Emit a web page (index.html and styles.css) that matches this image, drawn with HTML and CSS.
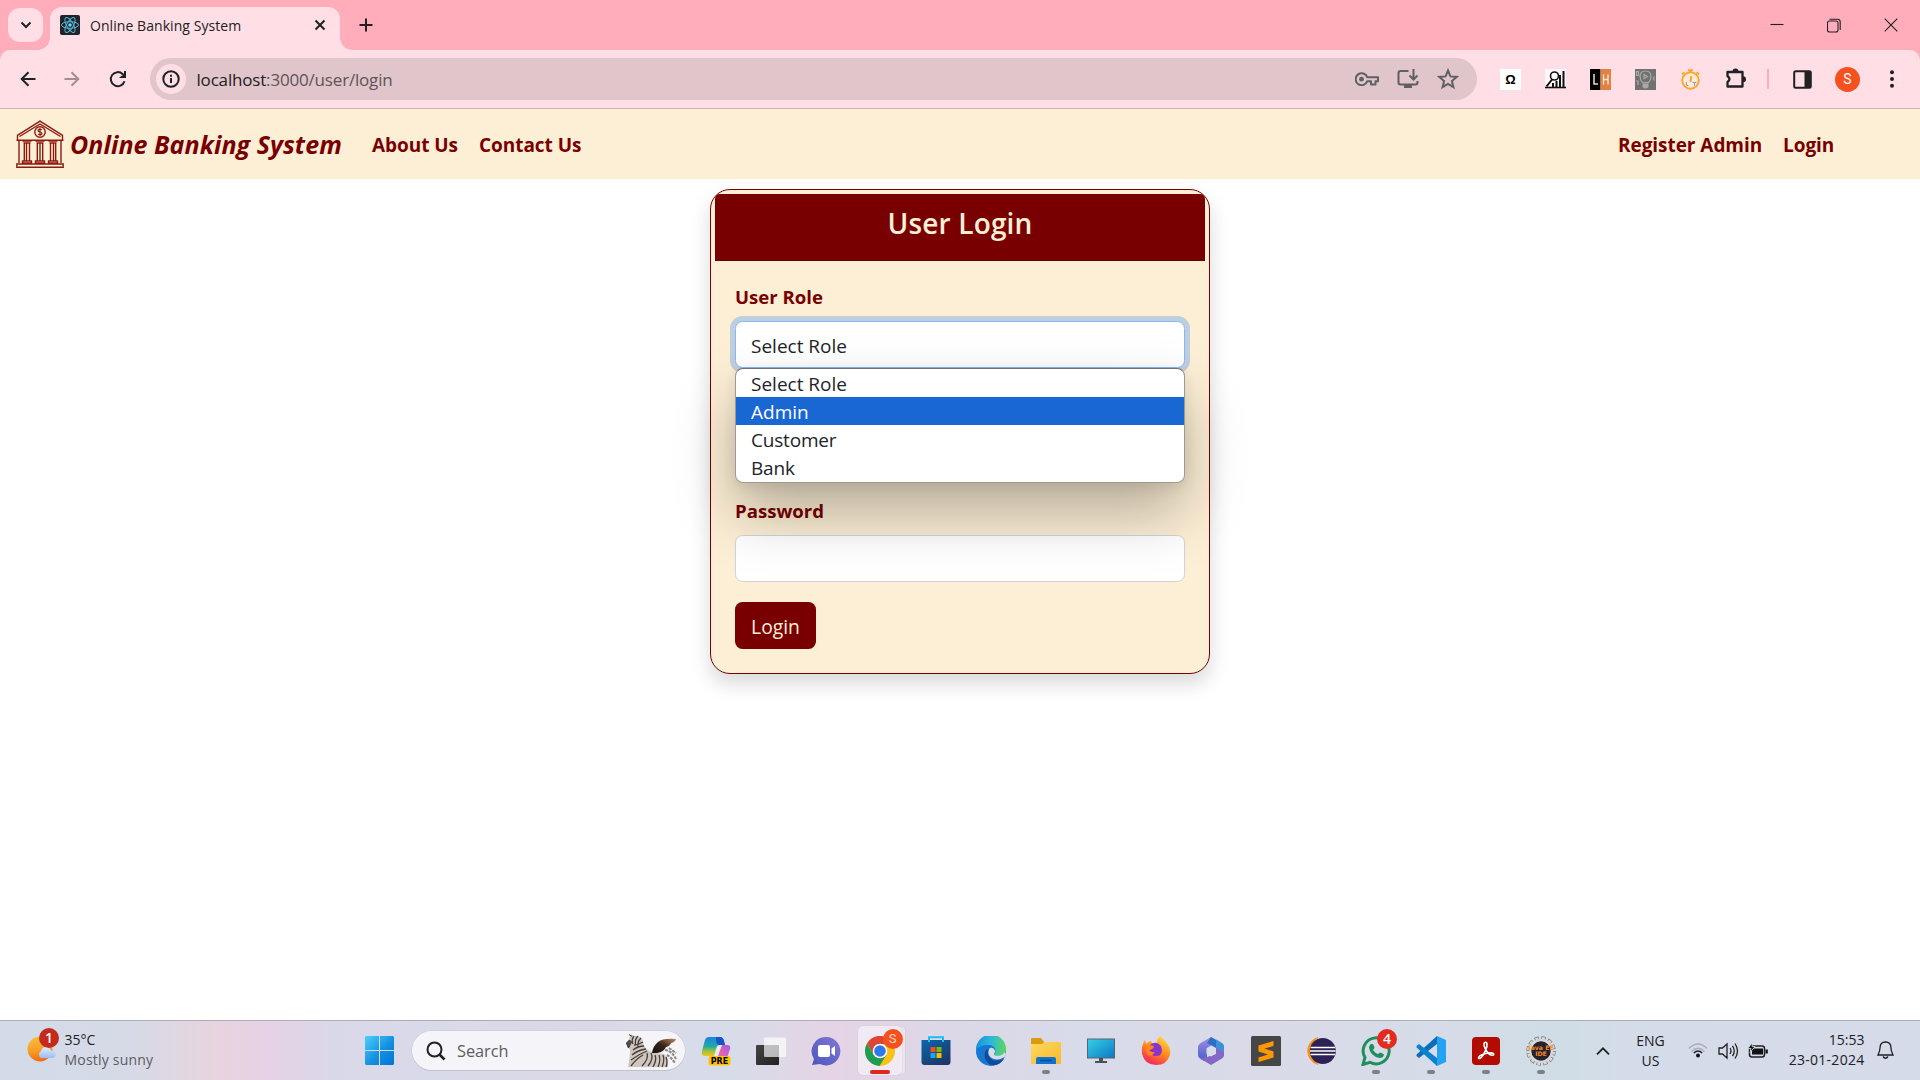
FILE: index.html
```html
<!DOCTYPE html>
<html lang="en">
<head>
<meta charset="utf-8">
<title>Online Banking System</title>
<link rel="stylesheet" href="styles.css">
</head>
<body>
<div class="tabstrip">
  <div class="tab-search"><svg width="12" height="8" viewBox="0 0 12 8"><path d="M1.5 1.5 6 6l4.500-4.500" class="ink w2"/></svg></div>
  <div class="tab">
    <svg class="favicon" width="20" height="20" viewBox="0 0 20 20"><rect width="20" height="20" rx="2" fill="#20232a"/><g fill="none" stroke="#53b9d4" stroke-width="1"><ellipse cx="10" cy="10" rx="8.500" ry="3.300"/><ellipse cx="10" cy="10" rx="8.500" ry="3.300" transform="rotate(60 10 10)"/><ellipse cx="10" cy="10" rx="8.500" ry="3.300" transform="rotate(120 10 10)"/></g><circle cx="10" cy="10" r="1.800" fill="#61dafb"/></svg>
    <span class="tab-title">Online Banking System</span>
    <svg class="tab-close" width="12" height="12" viewBox="0 0 12 12"><path d="M1.500 1.500l9 9M10.500 1.500l-9 9" class="ink w2"/></svg>
  </div>
  <svg class="new-tab" width="14" height="14" viewBox="0 0 14 14"><path d="M7 .5v13M.5 7h13" class="ink w2"/></svg>
  <div class="window-controls">
    <svg width="14" height="14" viewBox="0 0 14 14"><path d="M.5 6.500h13" class="ink w1"/></svg>
    <svg width="14" height="15" viewBox="0 0 14 15"><rect x=".5" y="3" width="10.500" height="11" rx="2" class="ink w1"/><path d="M2.500 1.200h8q2.700 0 2.700 2.700v8" class="ink w1"/></svg>
    <svg width="14" height="14" viewBox="0 0 14 14"><path d="M.7.7l12.600 12.600M13.300.7.7 13.300" class="ink w1"/></svg>
  </div>
</div>

<div class="toolbar-wrap"><div class="toolbar">
  <svg class="nav-icon" width="16" height="16" viewBox="0 0 16 16"><path d="M15.500 8H2M8.500 1.200 1.700 8l6.800 6.800" class="ink w2"/></svg>
  <svg class="nav-icon faded" width="16" height="16" viewBox="0 0 16 16"><path d="M.5 8H14M7.500 1.200 14.300 8l-6.800 6.800" class="ink w2"/></svg>
  <svg class="nav-icon reload" width="18" height="18" viewBox="0 0 18 18"><path d="M15.500 11.200A7 7 0 1 1 13.800 4.200L16 6.500" class="ink w2"/><path d="M17 1v7h-7l2.500-2.300L15 5.500V1z" fill="#202124"/></svg>
  <div class="omnibox">
    <span class="site-info"><svg width="18" height="18" viewBox="0 0 18 18"><circle cx="9" cy="9" r="7.700" class="ink w2"/><path d="M9 8v5M9 4.800v2" class="ink w2"/></svg></span>
    <span class="url"><span class="host">localhost</span>:3000/user/login</span>
    <svg width="24" height="14" viewBox="0 0 24 14"><path d="M12.300 5.200A6 6 0 1 0 12.300 9.200H16v3.300h4.500V9.200H23v-4z" fill="none" stroke="#5f6063" stroke-width="2" stroke-linejoin="round"/><circle cx="6.500" cy="7.200" r="2.400" fill="#5f6063"/></svg>
    <svg width="22" height="21" viewBox="0 0 22 21"><path d="M11.500 2H3.500Q1.500 2 1.500 4v9.500q0 2 2 2h15q2 0 2-2V12M16.500 0v9.500M12.500 6.500l4 4 4-4" fill="none" stroke="#5f6063" stroke-width="2"/><path d="M7 16h8v3H7z" fill="#5f6063"/></svg>
    <svg width="22" height="22" viewBox="0 0 22 22"><path d="M11 2.500l2.400 5.900 6.300.5-4.800 4.100 1.500 6.200L11 15.900l-5.400 3.300 1.500-6.200L2.300 8.900l6.300-.5z" fill="none" stroke="#5f6063" stroke-width="2"/></svg>
  </div>
  <div class="extensions">
    <svg width="21" height="21" viewBox="0 0 21 21"><rect width="21" height="21" fill="#fff"/><text x="10.500" y="15" text-anchor="middle" class="omega">Ω</text></svg>
    <svg width="21" height="21" viewBox="0 0 21 21"><rect width="21" height="19" fill="#fff" opacity=".75"/><path d="M0 18.500h21" stroke="#111" stroke-width="1.600"/><circle cx="9.500" cy="7" r="4" fill="#fff" stroke="#111" stroke-width="1.600"/><path d="M7 10.500 1.500 17.500M8 18v-4M11.500 18v-6M15 18V6M18.500 18V2" stroke="#111" stroke-width="2"/></svg>
    <svg width="21" height="21" viewBox="0 0 21 21"><rect width="10.500" height="21" fill="#000"/><rect x="10.500" width="10.500" height="21" fill="#e08244"/><path d="M4 5v10h4" fill="none" stroke="#ddd" stroke-width="1.500"/><path d="M13.500 5.500v10M18 5.500v10M13.500 10.500H18" fill="none" stroke="#fff" stroke-opacity=".8" stroke-width="1.300"/></svg>
    <svg width="21" height="21" viewBox="0 0 21 21"><rect width="21" height="21" fill="#717171"/><g fill="none" stroke="#aaa" stroke-width="1.200"><path d="M7.500 13.500Q5 11 5 7.500 5 2 10.500 2T16 7.500q0 3.500-2.500 6z"/><path d="M9 5.500v4l3.500-2z"/><path d="M1.500 2.500h2v4h-2zM1 12h2v4M19.500 7.500q-2 2.500 0 4"/></g><path d="M7.500 14.500h6V18q-3 3-6 0z" fill="#aaa"/></svg>
    <svg width="21" height="21" viewBox="0 0 21 21"><circle cx="10.500" cy="11.500" r="8.200" fill="#ffe9df" stroke="#fba72b" stroke-width="1.900"/><path d="M8 1.200h5M10.500 1v3M2 5.500l2.500-2.200M19 5.500l-2.500-2.200M10.500 13l.7-6" stroke="#fba72b" stroke-width="2"/><path d="M6.500 13v3.500h2M12.500 13.500h4M14.500 13.500V17" fill="none" stroke="#999" stroke-width="1"/></svg>
    <svg width="22" height="22" viewBox="0 0 22 22"><path d="M3 4h14.500v14.500H2.500V14q4-2.800 0-6V4z" fill="none" stroke="#202124" stroke-width="2.300" stroke-linejoin="round"/><path d="M7.500 3.500a3 3 0 0 1 6 0zM18 8.200a3 3 0 0 1 0 6z" fill="#202124"/></svg>
  </div>
  <span class="divider"></span>
  <svg class="side-panel" width="19" height="19" viewBox="0 0 19 19"><rect x="1.200" y="1.200" width="16.600" height="16.600" rx="1.500" class="ink w2"/><path d="M11.500 1H18v17h-6.500z" fill="#202124"/></svg>
  <span class="avatar">S</span>
  <svg class="menu-dots" width="4" height="18" viewBox="0 0 4 18"><g fill="#202124"><circle cx="2" cy="2.200" r="2"/><circle cx="2" cy="9" r="2"/><circle cx="2" cy="15.800" r="2"/></g></svg>
</div></div>

<main class="page">
  <nav class="navbar">
    <svg class="logo" width="48" height="48" viewBox="0 0 48 48" fill="none" stroke="#8c1c13" stroke-width="1.400"><path d="M1.500 15.500v4M46.500 15.500v4M1 15.700 24 1.200l23 14.500M3.500 16.500 24 4l20.500 12.500M.5 20.300h47"/><circle cx="24" cy="12" r="5.200"/><path d="M26 9.700q-3.800-1.200-4 .8 0 1.200 2 1.500t2 1.500q-.2 2-4 .8M24 8v8" stroke-width="1.200"/><path d="M6.500 21h9M19.500 21h9M32.500 21h9M7.500 23h7M20.500 23h7M33.500 23h7M8.300 23.500V41M10.500 23.500V41M13.500 23.500V41M21.300 23.500V41M24 23.500V41M26.700 23.500V41M34.500 23.500V41M37.500 23.500V41M39.700 23.500V41M3 20.500V43M45 20.500V43M6.500 41h9v2h-9zM19.500 41h9v2h-9zM32.500 41h9v2h-9zM.8 44h46.400v3.300H.8z"/></svg>
    <a class="brand">Online Banking System</a>
    <a class="nav-link about">About Us</a>
    <a class="nav-link contact">Contact Us</a>
    <a class="nav-link register">Register Admin</a>
    <a class="nav-link signin">Login</a>
  </nav>

  <section class="card">
    <h5 class="card-header">User Login</h5>
    <form class="card-body">
      <label class="label">User Role</label>
      <div class="select-wrap">
        <div class="control focused">Select Role</div>
        <ul class="options">
          <li>Select Role</li>
          <li class="active">Admin</li>
          <li class="tight">Customer</li>
          <li class="tight">Bank</li>
        </ul>
      </div>
      <label class="label password">Password</label>
      <div class="control"></div>
      <button class="submit" type="button">Login</button>
    </form>
  </section>
</main>

<footer class="taskbar">
  <div class="weather">
    <div class="weather-icon"><svg width="30" height="28" viewBox="0 0 30 28"><defs><linearGradient id="sun" x1=".2" y1="0" x2=".4" y2="1"><stop offset="0" stop-color="#f6c03b"/><stop offset=".6" stop-color="#f79a28"/><stop offset="1" stop-color="#f26a12"/></linearGradient><linearGradient id="cloud" x1="0" y1="0" x2="0" y2="1"><stop offset="0" stop-color="#dcecff"/><stop offset="1" stop-color="#9dbdf0"/></linearGradient></defs><circle cx="13" cy="14" r="12.500" fill="url(#sun)"/><path d="M14 23a4 4 0 0 1 0-7q1-4 5-4 4 0 5 3.500 4.500.5 4.500 4T25 23z" fill="url(#cloud)"/></svg><span class="badge dark">1</span></div>
    <div class="weather-text"><span class="temp">35°C</span><span class="cond">Mostly sunny</span></div>
  </div>
  <div class="app start"><svg width="29" height="29" viewBox="0 0 29 29"><defs><linearGradient id="win" x1="0" y1="0" x2="1" y2="1"><stop offset="0" stop-color="#4cd0fb"/><stop offset=".55" stop-color="#1390e0"/><stop offset="1" stop-color="#0474d3"/></linearGradient></defs><path d="M1 0h13v14H0V1zM15 0h13l1 1v13H15zM0 15h14v14H1l-1-1zM15 15h14v13l-1 1H15z" fill="url(#win)"/></svg></div>
  <div class="search">
    <svg width="20" height="20" viewBox="0 0 20 20"><circle cx="8.500" cy="8.500" r="7" class="ink w2"/><path d="M13.500 13.500l5 5" class="ink w25"/></svg>
    <span class="search-text">Search</span>
    <svg class="zebra" width="54" height="35" viewBox="0 0 54 35"><defs><linearGradient id="wing" x1="0" y1="1" x2="1" y2="0"><stop offset="0" stop-color="#151210"/><stop offset=".5" stop-color="#3a2519"/><stop offset="1" stop-color="#c08a62"/></linearGradient></defs><path d="M3 34q2-8 2-17l-3-4q-2-3 1-5L6 1l3 2q8-1 9 6 1 6 6 9 8 3 15 3 5 3 4 13z" fill="#cfc6bd"/><path d="M27 20q1-7 6-11 5-4 18-3-1 3-5 4-1 3-5 4-2 5-9 6z" fill="url(#wing)"/><path d="M9 3q-3 4-1 8M13 3q-4 4-2 9M16 5q-4 4-3 9M18 9q-5 3-9 3M19 13q-6 0-11 4M21 16q-8 1-14 6M22 18q-8 3-16 9M18 22q-7 4-12 11M22 20q2 6-5 13M26 20q3 6-3 13M30 22q2 5-2 12M34 22q2 5-1 12M38 22q2 5-1 12M41 24q2 5 0 10" fill="none" stroke="#463f3c" stroke-width="1.300"/><path d="M1.500 10l3-3 2 2-3 6zM4 1.500l3 2" fill="#55504e" stroke="#333"/><path d="M40 17q7 1 11 9M42 22q4 2 8 8M44 15l7 5" fill="none" stroke="#8d867f" stroke-width="2" stroke-dasharray="3 1"/></svg>
  </div>
  <div class="app"><svg width="30" height="30" viewBox="0 0 30 30"><defs><linearGradient id="cpa" x1="0" y1="0" x2="0" y2="1"><stop offset="0" stop-color="#1685e8"/><stop offset=".5" stop-color="#25a9a0"/><stop offset=".75" stop-color="#9bc53a"/><stop offset="1" stop-color="#f5c21c"/></linearGradient><linearGradient id="cpb" x1="1" y1="0" x2="0" y2="1"><stop offset="0" stop-color="#a855f0"/><stop offset="1" stop-color="#ff6f86"/></linearGradient></defs><path d="M8 1h11q3 0 4 4l1 4h-6q-2 0-3 4l-2 7H4Q0 20 1 15L4 4q1-3 4-3z" fill="url(#cpa)"/><path d="M15 1h4q3 0 4 4l1 4h-6q-2 0-3-5z" fill="#1655c5"/><path d="M19 9h7q4 0 3 4l-2 6q-1 3-4 3h-8z" fill="url(#cpb)"/><path d="M18.500 9h2.500l-4 11h-3.500l2-7q1-3.500 3-4z" fill="#eee8f2"/><rect x="7.500" y="20" width="22" height="9.500" rx="2.500" fill="#ffc400"/><text x="18.500" y="28" text-anchor="middle" class="pre">PRE</text></svg></div>
  <div class="app"><svg width="30" height="30" viewBox="0 0 30 30"><defs><linearGradient id="tv" x1="0" y1="0" x2="1" y2="1"><stop offset="0" stop-color="#444"/><stop offset="1" stop-color="#222"/></linearGradient></defs><rect y="9" width="23" height="20" rx="1" fill="url(#tv)"/><rect x="8" y="1.500" width="22" height="19.500" rx="1" fill="#fff" opacity=".68"/></svg></div>
  <div class="app"><svg width="30" height="30" viewBox="0 0 30 30"><defs><linearGradient id="chat" x1="1" y1="0" x2="0" y2="1"><stop offset="0" stop-color="#8377d6"/><stop offset="1" stop-color="#4c56bd"/></linearGradient></defs><path d="M15 1a14.200 14.200 0 1 1-6 27l-8 1 2-6A14.200 14.200 0 0 1 15 1z" fill="url(#chat)"/><rect x="7" y="9" width="12" height="12" rx="2" fill="#fff"/><path d="M20.500 12.500l3.500-2.500v10l-3.500-2.500z" fill="#fff"/></svg></div>
  <div class="app"><div class="tile"><svg width="30" height="30" viewBox="0 0 30 30"><circle cx="15" cy="15" r="15" fill="#fbc116"/><path d="M15 8H28.300A15 15 0 0 0 2 7.500l6.500 11z" fill="#db4437"/><path d="M2 7.500A15 15 0 0 0 14.500 30L21.500 18.700 15 22 8.500 18.700z" fill="#1e9e55"/><circle cx="15" cy="15" r="7.300" fill="#fff"/><circle cx="15" cy="15" r="5.800" fill="#2e78ea"/></svg><span class="badge profile">S</span></div><span class="run-mark current"></span></div>
  <div class="app"><svg width="30" height="30" viewBox="0 0 30 30"><defs><linearGradient id="store" x1="0" y1="0" x2=".7" y2="1"><stop offset="0" stop-color="#0c66b0"/><stop offset="1" stop-color="#1c3866"/></linearGradient></defs><path d="M8 6V1.200h14V6" fill="none" stroke="#1cbdf2" stroke-width="2"/><path d="M.5 4h29v22q0 3-3 3h-23q-3 0-3-3z" fill="url(#store)"/><path d="M8 4v2M22 4v2" stroke="#1cbdf2" stroke-width="2"/><path d="M9.500 11h5v5h-5z" fill="#f25022"/><path d="M15.500 11h5v5h-5z" fill="#7fba00"/><path d="M9.500 17h5v5h-5z" fill="#1aa7f0"/><path d="M15.500 17h5v5h-5z" fill="#ffb900"/></svg></div>
  <div class="app"><svg width="30" height="30" viewBox="0 0 30 30"><defs><linearGradient id="ed1" x1="0" y1=".3" x2="1" y2=".4"><stop offset="0" stop-color="#1d8de0"/><stop offset=".5" stop-color="#2bb9dc"/><stop offset="1" stop-color="#5ed65c"/></linearGradient></defs><circle cx="15" cy="15" r="15" fill="#1477d4"/><path d="M0 14A15 15 0 0 1 30 13q0 7-7.500 7-4.500 0-4.500-2 1.500-1 1.500-3.500Q19 9 12 9 4 9 0 14z" fill="url(#ed1)"/><path d="M10 14q-4 8 3 14 8 4 15-5-8 3-13 0-5-4-2-10z" fill="#0f4b96"/><path d="M12.500 15q-1 5 4 7.500 6 2.500 11-1 1.500-1 .5 1L30 18l-1-2q-3 4-7 3.800-4.500 0-4-2 1.500-1 1-3.500-1.500-3-4-2.500t-2.500 3.200z" fill="#d9dbe9"/></svg></div>
  <div class="app"><svg width="30" height="30" viewBox="0 0 30 30"><defs><linearGradient id="fold" x1="0" y1="0" x2="1" y2="1"><stop offset="0" stop-color="#ffd95e"/><stop offset="1" stop-color="#f7b92e"/></linearGradient></defs><path d="M0 3q0-1 1-1h9l3 4v6H0z" fill="#dd9a0c"/><path d="M0 8h11l2-2h16q1 0 1 1v20q0 1-1 1H1q-1 0-1-1z" fill="url(#fold)"/><path d="M5 28v-5q0-2 2-2h16q2 0 2 2v5z" fill="#1273cd"/><path d="M9 24.500h12" stroke="#0b4a94" stroke-width="1.500"/></svg><span class="run-mark"></span></div>
  <div class="app"><svg width="28" height="26" viewBox="0 0 28 26"><defs><linearGradient id="mon" x1="0" y1="0" x2="1" y2="1"><stop offset="0" stop-color="#34d2e4"/><stop offset="1" stop-color="#0c77c8"/></linearGradient></defs><rect x=".5" y="1" width="27" height="19" fill="url(#mon)" stroke="#5b646c"/><path d="M12 20h4v3h4v2H8v-2h4z" fill="#4c5157"/></svg></div>
  <div class="app"><svg width="30" height="30" viewBox="0 0 30 30"><defs><linearGradient id="ff" x1=".8" y1="0" x2=".3" y2="1"><stop offset="0" stop-color="#ffe13f"/><stop offset=".5" stop-color="#ff8a1e"/><stop offset="1" stop-color="#f5205f"/></linearGradient></defs><path d="M19 0q6 5 8 9 3 5 2 10Q26 29 15 29T1 18Q0 10 4 4l1 4q3-3 5-3l1 2q3 1 5 1-1-5 3-8z" fill="url(#ff)"/><path d="M9 9q6-5 11 1 3 10-5 10-6 0-7-6z" fill="#8a34c9"/><path d="M4 12q2-4 9-2-1 4-5 4 3 3 6 2-3 5-7 3z" fill="#ff851c"/></svg></div>
  <div class="app"><svg width="26" height="28" viewBox="0 0 26 28"><defs><linearGradient id="m1" x1="0" y1="0" x2="0" y2="1"><stop offset="0" stop-color="#a78ae0"/><stop offset="1" stop-color="#4560cf"/></linearGradient></defs><path d="M13 0 2 6.500Q0 8 0 10v8q0 2 2 3.500l4 2.500 3-4V12l7-5z" fill="url(#m1)"/><path d="M13 0q1 0 11 6.500 2 1.500 2 3.500v9l-8-4v-4L9 6z" fill="#2a70c8"/><path d="M26 12v6q0 2-2 3.500L13 28 2 21.500l7-1.500 9-3V9z" fill="#8467c6"/><path d="M18 11l8 4V9q0-1.500-2-3l-6-3.500z" fill="#3f8fdb"/><path d="M13 8.500l4.500 2.700v5.600L13 19.500l-4.500-2.700v-5.600z" fill="#d9dbe9"/></svg></div>
  <div class="app"><svg width="30" height="30" viewBox="0 0 30 30"><rect width="30" height="30" rx="1.500" fill="#464646"/><path d="M22.500 5 7.500 9.500v6l9.500 3-9.500 3V26l15-4.500v-6l-9-3 9-2.500z" fill="#ff9800"/></svg></div>
  <div class="app"><svg width="30" height="30" viewBox="0 0 30 30"><path d="M12 1.500A14 14 0 0 0 12 28.500 17 17 0 0 1 12 1.500z" fill="#f7941e" stroke="#f7941e"/><circle cx="16.800" cy="15" r="13" fill="#2c2255"/><path d="M4.500 11.500h24.500M4 15h25.500M4.500 18.500h24.500" stroke="#fff" stroke-width="1.700"/></svg></div>
  <div class="app"><svg width="30" height="30" viewBox="0 0 30 30"><path d="M2 28.500l2-7A13 13 0 1 1 9 26.300z" fill="none" stroke="#1f8f5b" stroke-width="3"/><path d="M10 8q2-1 3 2l.5 2-1.500 2q2 3 5 4l2-1.500q2 .5 4 2-.5 3.500-4.500 3.500Q9 20 8 11.500 8 9 10 8z" fill="#1f8f5b"/></svg><span class="badge count">4</span><span class="run-mark"></span></div>
  <div class="app"><svg width="30" height="30" viewBox="0 0 30 30"><path d="M21 0v8L3 22l-2.500-2v-1.500z" fill="#0a6fb8"/><path d="M21 30v-8L3 8 .5 10v1.500z" fill="#0c82cf"/><path d="M21 0 30 4v22l-9 4z" fill="#24a3f2"/></svg><span class="run-mark"></span></div>
  <div class="app"><svg width="28" height="28" viewBox="0 0 28 28"><rect width="28" height="28" rx="4" fill="#b30b00"/><path d="M13 5.500c2.500-1 2.500 3 1 6.500-1.500 4-4.500 9-6.500 9.500-2 0-1-2.500 3-4 4-1.600 9.500-2.200 11-.8 1 1.800-1.800 2.300-4.300.4C14 14.500 11.500 8.500 12 6.500z" fill="none" stroke="#fff" stroke-width="1.600"/></svg><span class="run-mark"></span></div>
  <div class="app"><svg width="30" height="30" viewBox="0 0 30 30"><circle cx="15" cy="15" r="12.700" fill="none" stroke="#6f6f6f" stroke-width="4" stroke-dasharray="4.200 2.450"/><circle cx="15" cy="15" r="12.400" fill="none" stroke="#d8d8d8" stroke-width="3.400" stroke-dasharray="3 3.490" stroke-dashoffset="-.6"/><circle cx="15" cy="15" r="10.800" fill="#26222e" stroke="#d8d8d8" stroke-width="2.200"/><text x="15" y="13.500" text-anchor="middle" class="jee">Java EE</text><text x="15" y="20" text-anchor="middle" class="jee">IDE</text></svg><span class="run-mark"></span></div>
  <div class="tray">
    <svg class="chevron" width="14" height="8" viewBox="0 0 14 8"><path d="M1 7.300l6-6 6 6" class="ink w18"/></svg>
    <div class="lang"><span>ENG</span><span>US</span></div>
    <svg class="wifi" width="20" height="15" viewBox="0 0 20 15" fill="none"><path d="M.8 5.500q9.200-9 18.400 0M3.500 8.500q6.500-6.500 13 0" stroke="#a9adb8" stroke-width="1.300"/><path d="M5.800 10q4.200-4 8.400 0" stroke="#222" stroke-width="1.500"/><circle cx="10" cy="12.500" r="2" fill="#111"/></svg>
    <svg class="volume" width="21" height="18" viewBox="0 0 21 18"><path d="M1 6h3.500L9 2v14l-4.500-4H1zM12 6q2 3 0 6M14.500 3.800q3.500 5.200 0 10.400M17 1.500q5 7.500 0 15" class="ink w13"/></svg>
    <svg class="battery" width="20" height="16" viewBox="0 0 20 16"><rect x="1.500" y="3" width="15" height="11" rx="2.500" class="ink w15"/><path d="M4 5.500h11v6H4z" fill="#111"/><path d="M17.500 6.500h2.300v4h-2.300z" fill="#111"/><path d="M4 0 0 5.500h3L2 9.500l5-6H4.200z" fill="#111" stroke="#d6dbe8" stroke-width=".8"/></svg>
    <div class="clock"><span>15:53</span><span class="date">23-01-2024</span></div>
    <svg class="bell" width="17" height="19" viewBox="0 0 17 19"><path d="M8.500 1q5.500 0 5.500 6 0 3 2 7H1q2-4 2-7 0-6 5.500-6z" class="ink w13"/><path d="M6 15.500q2.500 3.500 5 0" class="ink w13"/></svg>
  </div>
</footer>
</body>
</html>
```
FILE: styles.css
```css
* { box-sizing: border-box; }
body {
  margin: 0;
  width: 1920px;
  height: 1080px;
  overflow: hidden;
  display: flex;
  flex-direction: column;
  background: #fff;
  font-family: "Open Sans", "Noto Sans", sans-serif;
  color: #202124;
}
svg { display: block; flex: none; }
.ink { fill: none; stroke: #202124; }
.w1 { stroke-width: 1.100; }
.w13 { stroke-width: 1.300; }
.w15 { stroke-width: 1.500; }
.w18 { stroke-width: 1.800; }
.w2 { stroke-width: 2; }
.w25 { stroke-width: 2.500; }

/* Browser tab strip */
.tabstrip {
  height: 50px;
  flex: none;
  display: flex;
  align-items: center;
  padding-left: 8px;
  background: #ffadbb;
}
.tab-search {
  width: 35px;
  height: 34px;
  border-radius: 12px;
  background: #ffdfe5;
  display: flex;
  align-items: center;
  justify-content: center;
}
.tab {
  position: relative;
  align-self: flex-end;
  width: 290px;
  height: 43px;
  margin-left: 7px;
  padding: 0 14px 7px 10px;
  border-radius: 12px 12px 0 0;
  background: #ffdfe5;
  display: flex;
  align-items: center;
}
.tab::before, .tab::after {
  content: "";
  position: absolute;
  bottom: 0;
  width: 12px;
  height: 12px;
}
.tab::before { left: -12px; background: radial-gradient(circle at 0 0, transparent 11.500px, #ffdfe5 12px); }
.tab::after { right: -12px; background: radial-gradient(circle at 100% 0, transparent 11.500px, #ffdfe5 12px); }
.tab-title { margin-left: 10px; font-size: 14px; letter-spacing: .06px; }
.tab-close { margin-left: auto; }
.new-tab { margin-left: 18.500px; }
.window-controls { margin-left: auto; display: flex; gap: 43px; padding-right: 22px; }

/* Browser toolbar */
.toolbar-wrap { flex: none; background: #ffadbb; }
.toolbar {
  height: 59px;
  display: flex;
  align-items: center;
  padding-left: 20px;
  background: #ffdfe5;
  border-bottom: 1px solid #cdb2bc;
  border-radius: 10px 10px 0 0;
}
.nav-icon { margin-right: 28px; }
.nav-icon.reload { margin: 0 27px 0 1px; }
.faded { opacity: .42; }
.omnibox {
  width: 1327px;
  height: 42px;
  margin-left: -4px;
  padding: 0 18px 0 6px;
  border-radius: 21px;
  background: #e0c5ca;
  display: flex;
  align-items: center;
  gap: 18px;
}
.site-info {
  width: 30px;
  height: 30px;
  border-radius: 50%;
  background: #ffdfe5;
  display: flex;
  align-items: center;
  justify-content: center;
}
.url { margin: 0 auto 0 -7.500px; font-size: 17px; letter-spacing: -.18px; color: #5f5357; }
.host { color: #202124; }
.extensions { margin-left: 23px; display: flex; align-items: center; gap: 24px; }
.omega { font: bold 13px "Liberation Sans", sans-serif; }
.divider { width: 2px; height: 20px; margin: 0 24px 0 20px; background: #ffadbb; }
.avatar {
  width: 25px;
  height: 25px;
  margin: 0 30px 0 23px;
  border-radius: 50%;
  background: #f4511e;
  color: #fff;
  font: 14px/25px Roboto, sans-serif;
  text-align: center;
}

/* Site navigation */
.page { flex: 1; min-height: 0; display: flex; flex-direction: column; }
.navbar {
  height: 70px;
  flex: none;
  display: flex;
  align-items: center;
  padding-left: 16px;
  background: #fdefd5;
  color: #780000;
  white-space: nowrap;
}
.brand { margin-left: 6px; width: 302px; font-size: 25px; font-weight: 700; font-style: italic; letter-spacing: .05px; }
.nav-link { padding-top: 2px; font-size: 19px; font-weight: 700; letter-spacing: -.05px; }
.about { width: 107px; }
.register { margin-left: auto; width: 165px; }
.signin { width: 137px; }

/* Login card */
.card {
  width: 500px;
  height: 485px;
  flex: none;
  margin: 10px auto 0;
  padding: 4px;
  border: 1px solid #780000;
  border-radius: 20px;
  background: #fdefd5;
  box-shadow: 0 10px 20px rgba(0, 0, 0, .15);
}
.card-header {
  height: 67px;
  margin: 0;
  border-radius: 5px 5px 0 0;
  border-bottom: 1px solid #5f0505;
  background: #780000;
  color: #fdefd5;
  font-size: 28px;
  font-weight: 600;
  letter-spacing: .18px;
  line-height: 58px;
  text-align: center;
}
.card-body { padding: 20px; }
.label { display: block; height: 40px; line-height: 31px; font-size: 18.600px; font-weight: 700; color: #780000; }
.select-wrap { position: relative; }
.control {
  height: 47px;
  padding: 0 15px;
  border: 1px solid #ced4da;
  border-radius: 7.500px;
  background: #fff;
  line-height: 49px;
  font-size: 19px;
  color: #212529;
}
.focused { border-color: #86b7fe; box-shadow: 0 0 0 5px rgba(13, 110, 253, .25); }
.options {
  position: absolute;
  z-index: 1;
  top: 47px;
  left: 0;
  right: 0;
  margin: 0;
  padding: 0 0 1px;
  list-style: none;
  border: 1px solid #a0998c;
  border-top-color: #6d7278;
  border-radius: 8px;
  overflow: hidden;
  background: #fff;
  color: #212529;
  font-size: 19px;
  line-height: 31px;
  box-shadow: 0 30px 60px rgba(0, 0, 0, .28), 0 4px 14px rgba(0, 0, 0, .08);
}
.options li { height: 28px; padding-left: 15px; }
.options .active { background: #1967d2; color: #fff; }
.options .tight { letter-spacing: -.2px; }
.password { margin-top: 127px; }
.submit {
  display: block;
  width: 81px;
  height: 47px;
  margin-top: 20px;
  padding: 2px 0 0;
  border: 0;
  border-radius: 7.500px;
  background: #780000;
  color: #fdefd5;
  font: 19.300px "Open Sans", sans-serif;
}

/* Taskbar */
.taskbar {
  flex: none;
  height: 60px;
  border-top: 1px solid #adadb8;
  display: flex;
  align-items: center;
  white-space: nowrap;
  background: linear-gradient(90deg, #d3dbe8 0, #d6dae7 130px, #e6d4dd 210px, #e7d1e6 265px, #dad8e8 330px, #d9dae9 430px, #dbd8e7 570px, #d7dce9 730px, #e5d4e5 830px, #dcd8e7 950px, #d8dbe9 1080px, #dadae8 1260px, #d5dce8 1460px, #cfdde6 1560px, #d5dce9 1640px, #d6dbe9 1920px);
}
.weather { width: 352px; height: 59px; padding-left: 27px; display: flex; }
.weather-icon { position: relative; margin-top: 14px; }
.weather-text { margin: 9px 0 0 7.500px; display: flex; flex-direction: column; font-size: 14px; line-height: 20px; }
.cond { color: #5a5c63; letter-spacing: .2px; }
.badge {
  position: absolute;
  width: 20px;
  height: 20px;
  border-radius: 50%;
  color: #fff;
  background: #e32b1f;
  font: 600 14px/20px "Open Sans", sans-serif;
  text-align: center;
}
.badge.dark { left: 12px; top: -7px; background: #c42b1c; }
.badge.profile { left: 25px; top: 3px; background: #f4511e; color: #fbd5c8; font: 13px/20px Roboto, sans-serif; }
.badge.count { left: 28.500px; top: 8px; }
.app { position: relative; width: 55px; height: 59px; display: flex; align-items: center; justify-content: center; }
.tile {
  position: relative;
  width: 44px;
  height: 49px;
  margin-right: 3px;
  border-radius: 5px;
  background: #f1eaf4;
  display: flex;
  align-items: center;
  justify-content: center;
  box-shadow: 0 0 1px #bbb, 4px 0 0 -1px #eee4f0, 5px 0 0 -1px #d8cddc;
}
.run-mark { position: absolute; left: 23.500px; bottom: 6px; width: 8px; height: 4px; border-radius: 2px; background: #7d7f86; }
.run-mark.current { left: 16px; width: 20px; background: #e0261e; }
.search {
  width: 273px;
  height: 39px;
  margin: 0 3.500px 0 5px;
  padding: 0 6px 0 13.500px;
  border-radius: 20px;
  background: #f4f4f9;
  box-shadow: 0 0 0 .5px #c9c9d4, 0 1px 0 #b9b9c4;
  display: flex;
  align-items: center;
}
.search-text { margin-left: 11.500px; font-size: 16.300px; color: #5c5d60; }
.zebra { margin-left: auto; }
.pre { font: bold 8px "DejaVu Sans", sans-serif; }
.jee { font: bold 6.200px "DejaVu Sans", sans-serif; fill: #f08a24; }
.tray { margin-left: auto; display: flex; align-items: center; padding-right: 26.500px; font-size: 14px; line-height: 20px; }
.lang { width: 28px; margin: 0 23px 0 27px; display: flex; flex-direction: column; align-items: center; }
.volume { margin: 0 9px 0 10px; }
.clock { width: 76px; margin: -2px 12px 0 21px; display: flex; flex-direction: column; align-items: flex-end; }
.date { letter-spacing: .28px; }
```
